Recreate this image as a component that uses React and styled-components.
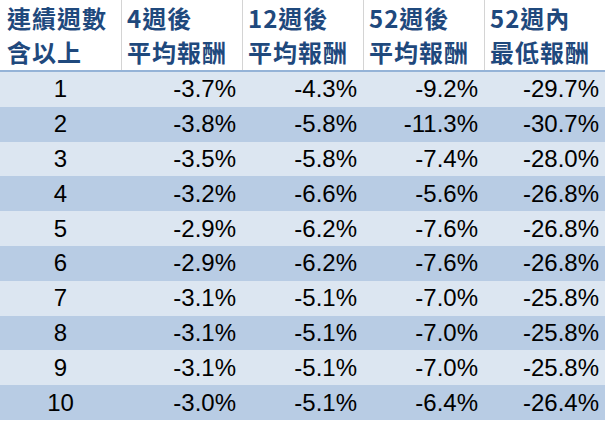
import React from "react";
import styled, { createGlobalStyle } from "styled-components";

const rows = [
  ["1", "-3.7%", "-4.3%", "-9.2%", "-29.7%"],
  ["2", "-3.8%", "-5.8%", "-11.3%", "-30.7%"],
  ["3", "-3.5%", "-5.8%", "-7.4%", "-28.0%"],
  ["4", "-3.2%", "-6.6%", "-5.6%", "-26.8%"],
  ["5", "-2.9%", "-6.2%", "-7.6%", "-26.8%"],
  ["6", "-2.9%", "-6.2%", "-7.6%", "-26.8%"],
  ["7", "-3.1%", "-5.1%", "-7.0%", "-25.8%"],
  ["8", "-3.1%", "-5.1%", "-7.0%", "-25.8%"],
  ["9", "-3.1%", "-5.1%", "-7.0%", "-25.8%"],
  ["10", "-3.0%", "-5.1%", "-6.4%", "-26.4%"],
];

const headers = [
  ["連績週數", "含以上"],
  ["4週後", "平均報酬"],
  ["12週後", "平均報酬"],
  ["52週後", "平均報酬"],
  ["52週內", "最低報酬"],
];

function App() {
  return (
    <>
      <GlobalStyle />
      <Table>
        <HeaderRow>
          {headers.map((h, i) => (
            <HeadCell key={i} first={i === 0}>
              <div>{h[0]}</div>
              <div>{h[1]}</div>
            </HeadCell>
          ))}
        </HeaderRow>
        {rows.map((r, i) => (
          <Row key={i} shade={i % 2 === 1}>
            {r.map((v, j) => (
              <Cell key={j} center={j === 0}>
                {v}
              </Cell>
            ))}
          </Row>
        ))}
      </Table>
    </>
  );
}

// css styles
const GlobalStyle = createGlobalStyle`
  body {
    margin: 0;
    background: #ffffff;
  }
`;

const Table = styled.div`
  width: 605px;
  display: flex;
  flex-direction: column;
`;

const HeaderRow = styled.div`
  display: grid;
  grid-template-columns: repeat(5, 121px);
  height: 70px;
  border-bottom: 2px solid #95b3d7;
`;

const HeadCell = styled.div`
  border-left: ${props => (props.first ? "none" : "1px solid #d4d4d4")};
  padding: 1px 0 0 ${props => (props.first ? "7px" : "5px")};
  font-family: "Noto Sans CJK TC", "Noto Sans", sans-serif;
  font-weight: 700;
  font-size: 24px;
  letter-spacing: 1px;
  line-height: 34px;
  color: #1f497d;
  white-space: nowrap;
`;

const Row = styled.div`
  display: grid;
  grid-template-columns: repeat(5, 121px);
  height: 34.8px;
  background: ${props => (props.shade ? "#b8cce4" : "#dce6f1")};
`;

const Cell = styled.div`
  display: flex;
  align-items: center;
  justify-content: ${props => (props.center ? "center" : "flex-end")};
  padding-right: ${props => (props.center ? "0" : "6px")};
  font-family: "Liberation Sans", Arial, sans-serif;
  font-size: 24px;
  color: #000000;
`;

export default App;
